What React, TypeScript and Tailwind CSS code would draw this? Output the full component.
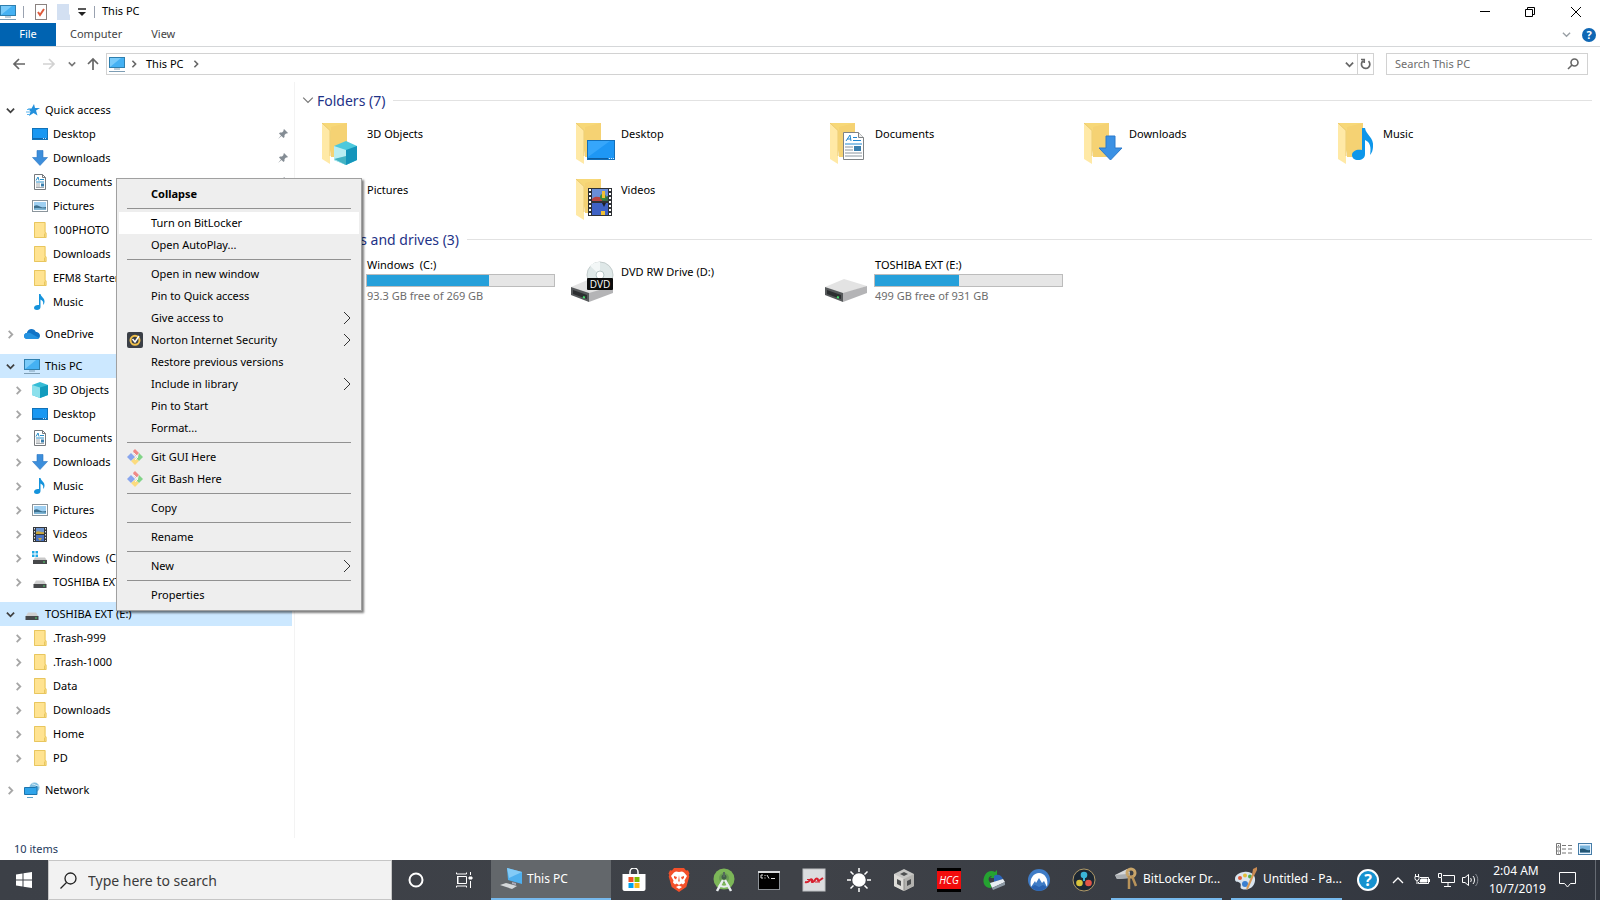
import React from 'react';
import clsx from 'clsx';

type IconName =
  | 'pc' | 'star' | 'desktop' | 'download' | 'document' | 'picture' | 'folder'
  | 'music' | 'onedrive' | 'cube' | 'video' | 'windrive' | 'drive' | 'network';

interface TreeItem {
  label: string;
  icon: IconName;
  level: 0 | 1;
  arrow?: 'open' | 'closed';
  selected?: boolean;
  pinned?: boolean;
}

const tree: TreeItem[][] = [
  [
    { label: 'Quick access', icon: 'star', level: 0, arrow: 'open' },
    { label: 'Desktop', icon: 'desktop', level: 1, pinned: true },
    { label: 'Downloads', icon: 'download', level: 1, pinned: true },
    { label: 'Documents', icon: 'document', level: 1, pinned: true },
    { label: 'Pictures', icon: 'picture', level: 1, pinned: true },
    { label: '100PHOTO', icon: 'folder', level: 1 },
    { label: 'Downloads', icon: 'folder', level: 1 },
    { label: 'EFM8 Starter', icon: 'folder', level: 1 },
    { label: 'Music', icon: 'music', level: 1 },
  ],
  [{ label: 'OneDrive', icon: 'onedrive', level: 0, arrow: 'closed' }],
  [
    { label: 'This PC', icon: 'pc', level: 0, arrow: 'open', selected: true },
    { label: '3D Objects', icon: 'cube', level: 1, arrow: 'closed' },
    { label: 'Desktop', icon: 'desktop', level: 1, arrow: 'closed' },
    { label: 'Documents', icon: 'document', level: 1, arrow: 'closed' },
    { label: 'Downloads', icon: 'download', level: 1, arrow: 'closed' },
    { label: 'Music', icon: 'music', level: 1, arrow: 'closed' },
    { label: 'Pictures', icon: 'picture', level: 1, arrow: 'closed' },
    { label: 'Videos', icon: 'video', level: 1, arrow: 'closed' },
    { label: 'Windows  (C:)', icon: 'windrive', level: 1, arrow: 'closed' },
    { label: 'TOSHIBA EXT (E:)', icon: 'drive', level: 1, arrow: 'closed' },
  ],
  [
    { label: 'TOSHIBA EXT (E:)', icon: 'drive', level: 0, arrow: 'open', selected: true },
    { label: '.Trash-999', icon: 'folder', level: 1, arrow: 'closed' },
    { label: '.Trash-1000', icon: 'folder', level: 1, arrow: 'closed' },
    { label: 'Data', icon: 'folder', level: 1, arrow: 'closed' },
    { label: 'Downloads', icon: 'folder', level: 1, arrow: 'closed' },
    { label: 'Home', icon: 'folder', level: 1, arrow: 'closed' },
    { label: 'PD', icon: 'folder', level: 1, arrow: 'closed' },
  ],
  [{ label: 'Network', icon: 'network', level: 0, arrow: 'closed' }],
];

interface MenuEntry {
  label: string;
  bold?: boolean;
  active?: boolean;
  submenu?: boolean;
  icon?: 'norton' | 'git';
}

const menuGroups: MenuEntry[][] = [
  [{ label: 'Collapse', bold: true }],
  [{ label: 'Turn on BitLocker', active: true }, { label: 'Open AutoPlay...' }],
  [
    { label: 'Open in new window' },
    { label: 'Pin to Quick access' },
    { label: 'Give access to', submenu: true },
    { label: 'Norton Internet Security', submenu: true, icon: 'norton' },
    { label: 'Restore previous versions' },
    { label: 'Include in library', submenu: true },
    { label: 'Pin to Start' },
    { label: 'Format...' },
  ],
  [
    { label: 'Git GUI Here', icon: 'git' },
    { label: 'Git Bash Here', icon: 'git' },
  ],
  [{ label: 'Copy' }],
  [{ label: 'Rename' }],
  [{ label: 'New', submenu: true }],
  [{ label: 'Properties' }],
];

const folders: { label: string; icon: IconName }[] = [
  { label: '3D Objects', icon: 'cube' },
  { label: 'Desktop', icon: 'desktop' },
  { label: 'Documents', icon: 'document' },
  { label: 'Downloads', icon: 'download' },
  { label: 'Music', icon: 'music' },
  { label: 'Pictures', icon: 'picture' },
  { label: 'Videos', icon: 'video' },
];

const SmallIcon: React.FC<{ name: IconName }> = ({ name }) => {
  switch (name) {
    case 'pc':
      return (
        <svg width="16" height="16" viewBox="0 0 16 16">
          <rect x="0.5" y="1.5" width="15" height="10" fill="#45b1f3" stroke="#2f7fae" />
          <path d="M1 11 12 2H1z" fill="#79cbfa" />
          <path d="M5 13h6M0 15.5h16" stroke="#7d9db4" />
        </svg>
      );
    case 'star':
      return (
        <svg width="16" height="16" viewBox="0 0 16 16">
          <path d="m10 2 1 4h5l-4 2.500 1.500 5L9.500 11 5 14l1.500-4.500L4 6.500h3.500z" fill="#2390dc" />
          <path d="M3 7.500h3M2 10h4M3 12.500h3" stroke="#5ab4ee" />
        </svg>
      );
    case 'desktop':
      return (
        <svg width="16" height="16" viewBox="0 0 16 16">
          <rect x="0.500" y="2.500" width="15" height="11" fill="#1897f2" stroke="#1172b8" />
          <path d="M1 12.500h14" stroke="#0f66ad" />
          <path d="M11 12.500h1m1 0h1" stroke="#bfe2fb" />
        </svg>
      );
    case 'download':
      return (
        <svg width="16" height="16" viewBox="0 0 16 16">
          <path d="M5 .5h6v7h4.500L8 15.500.5 7.500H5z" fill="#3c8edb" stroke="#2a76c2" strokeWidth=".6" />
        </svg>
      );
    case 'document':
      return (
        <svg width="16" height="16" viewBox="0 0 16 16">
          <path d="M2.500.5h8l3 3v12h-11z" fill="#fff" stroke="#75797d" />
          <path d="M10.500.5v3h3" fill="none" stroke="#75797d" />
          <path d="M4 6.500 6 3l1 3.500M8 5.500h4M4 8h8" stroke="#2a8fc9" fill="none" />
          <path d="M4 10h4M4 12h4M4 13.500h8" stroke="#8a9298" strokeWidth=".8" />
          <rect x="9" y="9.500" width="3" height="3" fill="#3a7fae" />
        </svg>
      );
    case 'picture':
      return (
        <svg width="16" height="16" viewBox="0 0 16 16">
          <rect x="0.500" y="2.500" width="15" height="11" fill="#fff" stroke="#8b959c" />
          <rect x="2" y="4" width="12" height="8" fill="#9fd0f2" />
          <path d="M2 8c3-2 5 0 7 1s4 0 5 0v3H2z" fill="#3c6f8e" />
          <path d="M2 10.500c4-1 8 0 12 0V12H2z" fill="#7fb6d6" />
        </svg>
      );
    case 'folder':
      return (
        <svg width="16" height="16" viewBox="0 0 16 16">
          <path d="M2 0h11.500v10l1 .5V16H2z" fill="#ffe391" />
          <path d="M2.500.5h10.500v10l1 .5v4.500H2.500z" fill="none" stroke="#e8c65f" />
          <path d="M12.500 15.500v-4" stroke="#e8c65f" />
        </svg>
      );
    case 'music':
      return (
        <svg width="16" height="16" viewBox="0 0 16 16">
          <path d="M7 0h1.500c.5 3 4.500 4 4 8-.1 1.200-.6 2.200-1.500 3 .8-2.800-.2-4.500-2.500-5.500V13c0 1.800-1.500 3-3.500 3-1.800 0-3-1-3-2.300C2 11.800 4.500 10.500 7 11z" fill="#1593dc" />
        </svg>
      );
    case 'onedrive':
      return (
        <svg width="16" height="16" viewBox="0 0 16 16">
          <path d="M3.500 13C1.500 13 0 11.800 0 10c0-1.600 1.200-2.800 2.800-3C3.500 4.500 5.300 3 7.500 3c2 0 3.500 1 4.200 2.800C14.200 6 16 7.500 16 9.700c0 2-1.300 3.300-3.300 3.300z" fill="#1073c6" />
          <path d="M2.800 7c2-.7 3.700 0 5.200 1l7 4c-.6.6-1.400 1-2.300 1H3.500C1.500 13 0 11.800 0 10c0-1.600 1.200-2.800 2.800-3z" fill="#2492e0" />
        </svg>
      );
    case 'cube':
      return (
        <svg width="16" height="16" viewBox="0 0 16 16">
          <path d="M0 3 8 0l8 3v10l-8 3-8-3z" fill="#35bcd6" />
          <path d="m0 3 8 2.500V16l-8-3z" fill="#8be0ec" />
          <path d="M16 3 8 5.500V16l8-3z" fill="#119bbd" />
        </svg>
      );
    case 'video':
      return (
        <svg width="16" height="16" viewBox="0 0 16 16">
          <rect x="1" y="1" width="14" height="15" fill="#33373b" />
          <rect x="4" y="2" width="8" height="6" fill="#6d95cf" />
          <rect x="4" y="9" width="8" height="6" fill="#4a72c0" />
          <path d="M4 6c3-2 5 1 8 0v2H4zM6 12h4l-2 3z" fill="#c9a63c" />
          <path d="M2.500 2v13M13.500 2v13" stroke="#dfe3e6" strokeDasharray="1.500 1.500" />
        </svg>
      );
    case 'windrive':
      return (
        <svg width="16" height="16" viewBox="0 0 16 16">
          <path d="M0 1h2.500v2.500H0zM3.500 1H6v2.500H3.500zM0 4.500h2.500V7H0zM3.500 4.500H6V7H3.500z" fill="#1fa9e6" />
          <path d="M3 7.500h10l2 3H1z" fill="#c9c9c9" />
          <rect x="1" y="10" width="14" height="4" fill="#46484a" />
          <path d="M11 12h2" stroke="#51d36c" />
        </svg>
      );
    case 'drive':
      return (
        <svg width="16" height="16" viewBox="0 0 16 16">
          <path d="M4 6.500h8l2.500 4h-13z" fill="#cfcfcf" />
          <rect x="1.500" y="10" width="13" height="4" fill="#46484a" />
          <path d="M11 12h2" stroke="#51d36c" />
        </svg>
      );
    default:
      return (
        <svg width="16" height="16" viewBox="0 0 16 16">
          <circle cx="10.500" cy="5.500" r="5" fill="#82bfe0" />
          <path d="M8 2c3 0 4 2 7 2" stroke="#d6ecf7" fill="none" />
          <path d="M.5 5.500h10.500l2-1v8h-12.500z" fill="#2fa4ea" stroke="#1c74ad" />
          <path d="M3 15.500h6" stroke="#5aa1c9" />
        </svg>
      );
  }
};

/* Large folder with the content glyph laid over its lower right corner */
const FolderTile: React.FC<{ name: IconName }> = ({ name }) => (
  <svg width="46" height="48" viewBox="0 0 46 48" className="shrink-0">
    <path d="M2 2h25v34H12z" fill="#f7d878" />
    <path d="m27 2-16 4v30h16z" fill="#f5d273" />
    <path d="M2 2v36l8 5V9.500z" fill="#ffe9a6" />
    <path d="m2 2 8 7.500V35" fill="none" stroke="#eccb72" />
    {name === 'cube' && (
      <g>
        <path d="m14 25 12-5 11 5v14l-11 5-12-5z" fill="#4cc9dd" />
        <path d="m14 25 12 4v15l-12-5z" fill="#b9edf2" />
        <path d="m14 38 12-3v9z" fill="#43b3c4" />
        <path d="M37 25 26 29v15l11-5z" fill="#1495bb" />
      </g>
    )}
    {name === 'desktop' && (
      <g>
        <rect x="13.500" y="19.500" width="27" height="19" fill="#1e97f5" stroke="#146fb9" />
        <path d="M14 36 36 20H14z" fill="#36a6fb" />
        <path d="M14 37.500h20" stroke="#0e5da0" />
        <path d="M35 37.500h1m1 0h1m1 0h1" stroke="#d5ecfd" />
      </g>
    )}
    {name === 'document' && (
      <g>
        <path d="M15.500 11.500h15l5 5v22h-20z" fill="#fff" stroke="#7e8285" />
        <path d="M30.500 11.500v5h5" fill="#eee" stroke="#7e8285" />
        <path d="m18 20 4-6 1 6m-4-2h4M25 16.500h4M25 19.500h8M17 23h17" stroke="#2187cf" fill="none" />
        <path d="M17 26h8M17 29h8M17 32h17M17 35h17" stroke="#8a949c" />
        <rect x="26" y="25" width="7" height="5" fill="#3b7fae" />
      </g>
    )}
    {name === 'download' && (
      <path d="M24 15h9v12h7L28.500 39 17 27h7z" fill="#3b91e4" stroke="#2c7bcc" />
    )}
    {name === 'music' && (
      <path d="M26 7h3c1 7 9 9 8 19-.2 3-1 6-3 8 1.500-8 0-13-5-15v14c0 4-3 6-7 6-3.500 0-6-2-6-5 0-4 5-6 10-5z" fill="#0d96ea" />
    )}
    {name === 'picture' && (
      <g>
        <rect x="12.500" y="18.500" width="28" height="20" fill="#fff" stroke="#8b959c" />
        <rect x="15" y="21" width="23" height="15" fill="#8cc7ee" />
        <path d="M15 29c8-4 14 3 23 1v6H15z" fill="#3c6f8e" />
      </g>
    )}
    {name === 'video' && (
      <g>
        <rect x="14" y="11" width="24" height="28" fill="#2e3135" />
        <rect x="18" y="12" width="16" height="12" fill="#6a8ed6" />
        <rect x="18" y="26" width="16" height="12" fill="#3f62c4" />
        <path d="M18 22c4-4 7-1 10-2v4H18z" fill="#b94440" />
        <path d="M28 24v-3l6-2v5z" fill="#3b6f42" />
        <circle cx="29" cy="20" r="3" fill="#3a8a3d" />
        <path d="M28 14h3v7h-3zM27 34h4v4h-4z" fill="#f0c033" />
        <path d="M28 26h4l-2 4z" fill="#1d2126" />
        <path d="M16 12v27M36 12v27" stroke="#fff" strokeWidth="2" strokeDasharray="2 2" />
      </g>
    )}
  </svg>
);

const DriveGlyph: React.FC<{ dvd?: boolean }> = ({ dvd }) => (
  <svg width="46" height="42" viewBox="0 0 46 42" className="mt-1 shrink-0">
    <path d="m1 26 19-8 23 7-24 8z" fill="#e3e3e3" />
    <path d="m19 32 24-7v7l-24 9z" fill="#b4b4b6" />
    <path d="m1 26 18 6v9L1 34z" fill="#55585a" />
    <path d="m3 29 14 5v4L3 33z" fill="#2c2e30" />
    <path d="m13 36 2 .6" stroke="#43dd6a" strokeWidth="2" />
    {dvd && (
      <g>
        <circle cx="30" cy="14" r="13" fill="#dfe8e8" stroke="#c3cccc" />
        <path d="M30 14 20 5a13 13 0 0 1 10-4z" fill="#f3f7f7" />
        <circle cx="30" cy="14" r="4" fill="#fff" stroke="#b5c6c6" />
        <rect x="17" y="17" width="26" height="12" rx="1" fill="#0c0c0c" />
        <text x="30" y="27" textAnchor="middle" fontSize="10" fill="#fff" fontFamily="Open Sans, sans-serif">DVD</text>
      </g>
    )}
  </svg>
);

const Chevron: React.FC<{ dir: 'right' | 'down'; color: string; size?: number; width?: number }> = ({ dir, color, size = 9, width = 2 }) => (
  <svg width={size} height={size} viewBox="0 0 10 10" fill="none" stroke={color} strokeWidth={width} className="shrink-0">
    <path d={dir === 'right' ? 'm3 1 4 4-4 4' : 'm1 3 4 4 4-4'} />
  </svg>
);

const NortonIcon = () => (
  <svg width="16" height="16" viewBox="0 0 16 16">
    <rect width="16" height="16" rx="2" fill="#3a3f46" />
    <circle cx="8" cy="8.300" r="4.500" fill="none" stroke="#f2c14b" strokeWidth="2" />
    <path d="m5.500 7 2.500 3 4-6" fill="none" stroke="#fff" strokeWidth="1.500" />
  </svg>
);

const GitIcon = () => (
  <svg width="16" height="16" viewBox="0 0 16 16">
    <path d="m8 0 4 4-3 3-1-1-2-4z" fill="#ef8a86" />
    <path d="m4 4 4 4-4 4-4-4z" fill="#88a5ee" />
    <path d="m12 4 4 4-4 4-3-3 2-1z" fill="#82d488" />
    <path d="m8 9 4 3-4 4-4-4z" fill="#fbdb7e" />
    <path d="m7 4 4 4-3 3" stroke="#f4f4f4" fill="none" />
  </svg>
);

const ContextMenu = () => (
  <div role="menu" className="absolute left-[116px] top-[178px] w-[246px] border border-[#a0a0a0] bg-[#eeeeee] px-[2px] py-1 shadow-[2px_2px_2px_rgba(0,0,0,0.5)]">
    {menuGroups.map((group, i) => (
      <React.Fragment key={i}>
        {i > 0 && <hr className="mx-2 my-[3px] border-[#919191]" />}
        {group.map((entry) => (
          <button
            key={entry.label}
            role="menuitem"
            className={clsx(
              'flex h-[22px] w-full items-center pl-2 pr-2 text-left',
              entry.active && 'bg-white',
              entry.bold && 'font-bold',
            )}
          >
            <span className="w-6">
              {entry.icon === 'norton' && <NortonIcon />}
              {entry.icon === 'git' && <GitIcon />}
            </span>
            <span className="flex-1">{entry.label}</span>
            {entry.submenu && (
              <svg width="8" height="14" viewBox="0 0 8 14" fill="none" stroke="#333">
                <path d="m1 1 6 6-6 6" />
              </svg>
            )}
          </button>
        ))}
      </React.Fragment>
    ))}
  </div>
);

const TitleBar = () => (
  <header className="flex h-[23px] items-center">
    <SmallIcon name="pc" />
    <span className="ml-[7px] h-3 w-px bg-gray-400" />
    <button aria-label="Properties" className="ml-[11px]">
      <svg width="12" height="16" viewBox="0 0 12 16">
        <rect x=".5" y=".5" width="11" height="15" fill="#fff" stroke="#8a8280" />
        <path d="m3 8 2 3 4-6" stroke="#df5b3c" strokeWidth="2" fill="none" />
      </svg>
    </button>
    <button aria-label="New folder" className="ml-[10px]">
      <svg width="13" height="16" viewBox="0 0 13 16">
        <path d="M0 0h12v10l1 1v5H0z" fill="#d3e0f2" />
      </svg>
    </button>
    <button aria-label="Customize Quick Access Toolbar" className="ml-2">
      <svg width="8" height="8" viewBox="0 0 8 8">
        <path d="M0 1h8" stroke="#222" strokeWidth="1.500" />
        <path d="M0 4h8L4 8z" fill="#222" />
      </svg>
    </button>
    <span className="ml-2 h-3 w-px bg-gray-400" />
    <h1 className="ml-[7px] flex-1">This PC</h1>
    <button aria-label="Minimize" className="flex w-[45px] justify-center">
      <svg width="10" height="10" viewBox="0 0 10 10" stroke="#000"><path d="M0 4.500h10" /></svg>
    </button>
    <button aria-label="Restore" className="flex w-[45px] justify-center">
      <svg width="10" height="10" viewBox="0 0 10 10" stroke="#000" fill="none"><path d="M.5 2.500h7v7h-7zM2.500 2V.5h7v7H8" /></svg>
    </button>
    <button aria-label="Close" className="flex w-12 justify-center">
      <svg width="12" height="12" viewBox="0 0 12 12" stroke="#000"><path d="m1 1 10 10M11 1 1 11" /></svg>
    </button>
  </header>
);

const Ribbon = () => (
  <nav className="flex h-6 items-stretch border-b border-[#d5d7d9] text-[#444]">
    <button className="w-14 bg-[#0063b1] text-white">File</button>
    <button className="ml-[14px]">Computer</button>
    <button className="ml-[29px]">View</button>
    <span className="flex-1" />
    <button aria-label="Expand the Ribbon" className="mr-[11px]">
      <Chevron dir="down" color="#9aa0a6" width={1.5} />
    </button>
    <button aria-label="Help" className="mr-1">
      <svg width="14" height="14" viewBox="0 0 14 14">
        <circle cx="7" cy="7" r="7" fill="#0f67b4" />
        <text x="7" y="11" textAnchor="middle" fontSize="11" fontWeight="700" fill="#fff">?</text>
      </svg>
    </button>
  </nav>
);

const AddressBar = () => (
  <div className="flex items-center pl-3 pr-3 pt-[6px]">
    <button aria-label="Back">
      <svg width="14" height="12" viewBox="0 0 14 12" fill="none" stroke="#666" strokeWidth="1.700"><path d="M13 6H2m5-5L2 6l5 5" /></svg>
    </button>
    <button aria-label="Forward" className="ml-4">
      <svg width="14" height="12" viewBox="0 0 14 12" fill="none" stroke="#d2d2d2" strokeWidth="1.700"><path d="M1 6h11M7 1l5 5-5 5" /></svg>
    </button>
    <button aria-label="Recent locations" className="ml-3">
      <Chevron dir="down" color="#777" size={8} />
    </button>
    <button aria-label="Up" className="ml-[11px]">
      <svg width="12" height="14" viewBox="0 0 12 14" fill="none" stroke="#666" strokeWidth="1.700"><path d="M6 13V2M1 7l5-5 5 5" /></svg>
    </button>
    <div className="ml-[7px] flex h-[22px] flex-1 items-center border border-[#d2d2d2] pl-[2px]">
      <SmallIcon name="pc" />
      <span className="ml-[5px]"><Chevron dir="right" color="#666" size={8} /></span>
      <button className="ml-2">This PC</button>
      <span className="ml-2 flex-1"><Chevron dir="right" color="#666" size={8} /></span>
      <button aria-label="Previous locations" className="mr-[3px]"><Chevron dir="down" color="#666" /></button>
      <button aria-label="Refresh" className="flex h-full w-4 items-center justify-center border-l border-[#d2d2d2]">
        <svg width="11" height="12" viewBox="0 0 11 12" fill="none" stroke="#666" strokeWidth="1.700">
          <path d="M8.500 3.200A4.200 4.200 0 1 1 3 3M1 1.500h3.200V5" />
        </svg>
      </button>
    </div>
    <label className="ml-3 flex h-[22px] w-[202px] items-center border border-[#d2d2d2] px-2">
      <input type="search" aria-label="Search This PC" placeholder="Search This PC" className="min-w-0 flex-1 outline-none placeholder:text-[#6d6d6d]" />
      <svg width="12" height="12" viewBox="0 0 12 12" fill="none" stroke="#666" strokeWidth="1.600">
        <circle cx="7.500" cy="4.500" r="3.500" />
        <path d="M5 7 1 11" />
      </svg>
    </label>
  </div>
);

const Sidebar = () => (
  <aside className="w-[295px] shrink-0 border-r border-[#f3f3f3] pr-[2px] pt-4">
    {tree.map((group, i) => (
      <ul key={i} className="mb-2">
        {group.map((item, j) => (
          <li key={j} className={clsx('flex h-6 items-center', item.selected && 'bg-[#cce8ff]')}>
            <button className={clsx('flex w-full items-center text-left', item.level === 0 ? 'pl-[6px]' : 'pl-[14px]')}>
              <span className="w-[18px]">
                {item.arrow && (
                  <Chevron dir={item.arrow === 'open' ? 'down' : 'right'} color={item.arrow === 'open' ? '#404040' : '#a6a6a6'} />
                )}
              </span>
              <SmallIcon name={item.icon} />
              <span className="ml-[5px] flex-1 whitespace-pre">{item.label}</span>
              {item.pinned && (
                <svg width="10" height="10" viewBox="0 0 10 10" className="mr-1">
                  <path d="m6 0 4 4-1 .5-1 0-1.500 1.500v2L5.500 9 3.500 7 0 10l3-3.500L1 4.500 2 3.500h2L5.500 2V1z" fill="#848c94" />
                </svg>
              )}
            </button>
          </li>
        ))}
      </ul>
    ))}
  </aside>
);

const SectionHeader: React.FC<{ title: string }> = ({ title }) => (
  <h2 className="flex h-6 items-center text-[14px] text-[#1e3287]">
    <span className="mr-[3px]"><Chevron dir="down" color="#777" size={12} width={1} /></span>
    {title}
    <span className="ml-2 h-px flex-1 bg-[#e2e2e2]" />
  </h2>
);

const UsageBar: React.FC<{ used: number }> = ({ used }) => (
  <div className="h-[13px] w-full border border-[#bcbcbc] bg-[#e6e6e6]">
    <div className="h-full bg-[#26a0da]" style={{ width: `${used}%` }} />
  </div>
);

const Drive: React.FC<{ name: string; used?: number; detail?: string }> = ({ name, used, detail }) => (
  <div className="flex h-14 w-[254px] pt-[6px]">
    <DriveGlyph dvd={used === undefined} />
    {used === undefined ? (
      <p className="ml-[5px] pt-[7px] leading-4">{name}</p>
    ) : (
      <div className="ml-1 w-[189px]">
        <p className="mb-px whitespace-pre pl-px leading-4">{name}</p>
        <UsageBar used={used} />
        <p className="pl-px pt-px leading-4 text-[#6d6d6d]">{detail}</p>
      </div>
    )}
  </div>
);

const Content = () => (
  <main className="min-w-0 flex-1 pl-[7px] pr-2 pt-[6px]">
    <SectionHeader title="Folders (7)" />
    <div className="mt-[9px] flex flex-wrap pl-[18px]">
      {folders.map((f) => (
        <div key={f.label} className="flex h-14 w-[254px]">
          <FolderTile name={f.icon} />
          <p className="pl-px pt-[5px] leading-4">{f.label}</p>
        </div>
      ))}
    </div>
    <div className="-mt-1.5">
      <SectionHeader title="Devices and drives (3)" />
    </div>
    <div className="flex flex-wrap pl-[14px]">
      <Drive name="Windows  (C:)" used={65} detail="93.3 GB free of 269 GB" />
      <Drive name="DVD RW Drive (D:)" />
      <Drive name="TOSHIBA EXT (E:)" used={45} detail="499 GB free of 931 GB" />
    </div>
  </main>
);

const StatusBar = () => (
  <footer className="flex h-[22px] items-center pl-[14px] pr-2 text-[#1e395b]">
    <span className="flex-1">10 items</span>
    <button aria-label="Details view" className="mr-[6px]">
      <svg width="16" height="12" viewBox="0 0 16 12" fill="none" stroke="#777">
        <path d="M.5.500h4v11h-4zM.5 4h4M.5 8h4M2 2.500h1M2 6h1M2 10h1M6 2.500h4M6 6h4M6 10h4M12 2.500h4M12 6h4M12 10h4" />
      </svg>
    </button>
    <button aria-label="Large icons view">
      <svg width="14" height="12" viewBox="0 0 14 12">
        <rect x=".5" y=".5" width="13" height="11" fill="#e8f4ff" stroke="#467da8" />
        <rect x="2" y="2.500" width="10" height="7" fill="#79b4dc" />
        <path d="M2 6c4-2 6 2 10 1v2.500H2z" fill="#235574" />
      </svg>
    </button>
  </footer>
);

const taskbarApps: { name: string; art: React.ReactNode }[] = [
  {
    name: 'Microsoft Store',
    art: (
      <g>
        <path d="M8 7V4a4 4 0 0 1 8 0v3" fill="none" stroke="#fff" strokeWidth="1.500" />
        <path d="M.5 6h23v15c0 1-1 2-2 2h-19c-1 0-2-1-2-2z" fill="#fff" />
        <path d="M6.500 9h5v5h-5z" fill="#f05125" />
        <path d="M12.500 9h5v5h-5z" fill="#7fba00" />
        <path d="M6.500 15h5v5h-5z" fill="#00a3ee" />
        <path d="M12.500 15h5v5h-5z" fill="#fdb813" />
      </g>
    ),
  },
  {
    name: 'Brave',
    art: (
      <g>
        <path d="M7 0h10l2 2.500 2-.2 1.500 3.200-.8 1.500.6 1.500-3 10.500L12 24l-7.300-5-3-10.500.6-1.500-.8-1.500L3 2.300l2 .2z" fill="#f4502a" />
        <path d="m12 4 3-.5 2 1 3 3.500-2.500 4.500.5 2-2 2-1.500-1L12 17l-2.500-1.500-1.500 1-2-2 .5-2L4 8l3-3.500 2-1z" fill="#fff" />
        <path d="m7 8 3 1-1 2.500L7 10zM17 8l-3 1 1 2.500 2-1.500zM12 7l.7 6-.7 1-.7-1z" fill="#f4502a" />
        <path d="m9 19 3 2 3-2-3-1.500z" fill="#fff" />
      </g>
    ),
  },
  {
    name: 'Android Studio',
    art: (
      <g>
        <circle cx="12" cy="11" r="10.500" fill="#7cb658" />
        <circle cx="12" cy="10" r="5" fill="#699c52" />
        <circle cx="12" cy="9" r="2.500" fill="#43604a" />
        <path d="M11 12 5 23M13 12l6 11" stroke="#e9eef0" strokeWidth="2.500" fill="none" />
        <path d="M7 17c3 2 7 2 10 0" stroke="#e9eef0" strokeWidth="2" fill="none" />
        <path d="M12 4v5" stroke="#566c5c" strokeWidth="2" />
      </g>
    ),
  },
  {
    name: 'Command Prompt',
    art: (
      <g>
        <rect x="1.500" y="3.500" width="21" height="18" fill="#000" stroke="#8d9298" />
        <path d="M1 4h22" stroke="#d8dadc" strokeWidth="2" />
        <path d="M6 7H4v3h2M8 7v1M8 9.500v1M10 7l2 3.500M14 10.500h4" stroke="#ddd" fill="none" />
      </g>
    ),
  },
  {
    name: 'Simplicity Studio',
    art: (
      <g>
        <rect x="1" y="1" width="22" height="22" fill="#dcdddf" stroke="#bfc1c4" />
        <path d="M3 14c3 1 4-1 5-2s3-1 2 1 2 1 3-1 3-2 3 0 2 0 5-2" stroke="#d7212f" strokeWidth="2" fill="none" />
        <path d="M5 11.500h5M13 14h5" stroke="#d7212f" />
      </g>
    ),
  },
  {
    name: 'Brightness',
    art: (
      <g stroke="#fff" strokeWidth="1.500">
        <circle cx="12" cy="12" r="6" fill="#fff" />
        <path d="M12 0v4M12 20v4M0 12h4M20 12h4M3.500 3.500l3 3M17.500 17.500l3 3M3.500 20.500l3-3M17.500 6.500l3-3" />
      </g>
    ),
  },
  {
    name: 'VirtualBox',
    art: (
      <g>
        <path d="m12 1 10 5v12l-10 5-10-5V6z" fill="#c6c6c4" />
        <path d="m2 6 10 5v12L2 18z" fill="#dddcd8" />
        <path d="m22 6-10 5v12l10-5z" fill="#b3b2af" />
        <path d="m8 6 4-2 4 2-4 2zM5 11l4 2v5l-4-2zM19 11l-4 2v5l4-2z" fill="#4d4f50" />
        <path d="M12 11v12" stroke="#8b8b88" fill="none" />
      </g>
    ),
  },
  {
    name: 'HCG',
    art: (
      <g>
        <rect width="24" height="24" fill="#000" />
        <rect y="3" width="24" height="18" fill="#f20d0d" />
        <text x="12" y="16" textAnchor="middle" fontSize="10" fontStyle="italic" fill="#fff" fontFamily="Open Sans, sans-serif">HCG</text>
      </g>
    ),
  },
  {
    name: 'Drive backup',
    art: (
      <g>
        <path d="M9 20C1 20 0 12 3 7c2-4 7-5 10-3l2-2v8H8l2-2c-4 0-5 5 0 8z" fill="#25a331" />
        <path d="M12 8c4-3 8 0 9 3l-9 3z" fill="#2b64b8" />
        <path d="m8 15 13-4 2 3-13 6z" fill="#e7edf2" />
        <path d="m10 20 13-6v3l-12 5z" fill="#8d9aa5" />
      </g>
    ),
  },
  {
    name: 'NordVPN',
    art: (
      <g>
        <circle cx="12" cy="12" r="11" fill="#3f7cc6" />
        <path d="M4 19C2 10 7 5 12 5s10 5 8 14l-3-6-2 2-3-5-3 5-1-2z" fill="#fff" />
        <path d="M4 19c5 5 11 5 16 0l-4-2-4 2-4-2z" fill="#2a63b1" />
      </g>
    ),
  },
  {
    name: 'DaVinci Resolve',
    art: (
      <g>
        <circle cx="12" cy="12" r="11" fill="#1c2733" stroke="#b09a68" />
        <circle cx="12" cy="7" r="3.300" fill="#3bb5d8" />
        <circle cx="7.500" cy="15" r="3.300" fill="#d9c43c" />
        <circle cx="16.500" cy="15" r="3.300" fill="#e25548" />
        <path d="M12 7v6" stroke="#3bb5d8" strokeWidth="2" />
      </g>
    ),
  },
];

const TaskWindow: React.FC<{ label: string; children: React.ReactNode }> = ({ label, children }) => (
  <button className="flex h-full w-[111px] items-center border-b-2 border-[#76b9ed] pl-[3px] text-left text-white">
    <svg width="24" height="24" viewBox="0 0 24 24" className="shrink-0">{children}</svg>
    <span className="ml-[5px] whitespace-nowrap">{label}</span>
  </button>
);

const Taskbar = () => (
  <div className="flex h-10 items-center bg-linear-to-r from-[#3c4047] via-[#3f4248] to-[#30353e] text-[12px]">
    <button aria-label="Start" className="flex h-full w-12 items-center justify-center">
      <svg width="16" height="16" viewBox="0 0 16 16" fill="#fff">
        <path d="m0 2.500 6.500-1v6H0zM7.500 1.300 16 0v7.500H7.500zM0 8.500h6.500v6L0 13.500zM7.500 8.500H16V16l-8.500-1.300z" />
      </svg>
    </button>
    <label className="flex h-full w-[344px] items-center border border-[#c6c6c6] bg-[#f2f2f2] pl-[11px]">
      <svg width="17" height="17" viewBox="0 0 17 17" fill="none" stroke="#222" strokeWidth="1.300">
        <circle cx="10.500" cy="6.500" r="5.500" />
        <path d="m6.500 10.500-6 6" />
      </svg>
      <input type="text" aria-label="Type here to search" placeholder="Type here to search" className="ml-[11px] min-w-0 flex-1 text-[14px] outline-none placeholder:text-[#3a3a3a]" />
    </label>
    <button aria-label="Cortana" className="flex w-12 justify-center">
      <svg width="16" height="16" viewBox="0 0 16 16"><circle cx="8" cy="8" r="6.500" fill="none" stroke="#fff" strokeWidth="2" /></svg>
    </button>
    <button aria-label="Task View" className="flex w-12 justify-center">
      <svg width="17" height="16" viewBox="0 0 17 16" fill="none" stroke="#fff">
        <path d="M2 4.500h8.500v7H2zM.5.500v1.500h10V.500M.5 15.500V14h10v1.500M1.500 4v8M14.500 0v3M14.500 9v7" />
        <path d="M13 5h3v2h-3z" fill="#fff" />
      </svg>
    </button>
    <button className="ml-[3px] flex h-full w-[120px] items-center border-b-2 border-[#76b9ed] bg-[#63676b] pl-2 text-left text-white">
      <svg width="24" height="24" viewBox="0 0 24 24">
        <path d="m8 1 15 4v12L9 13z" fill="#4eb0ef" />
        <path d="m8 1 15 4-13 6z" fill="#83cbf7" />
        <path d="m13 15 4 1v2l-4-1z" fill="#aab" />
        <path d="m1 18 6-2 11 3-5 3z" fill="#d5d8da" />
      </svg>
      <span className="ml-1">This PC</span>
    </button>
    {taskbarApps.map((app) => (
      <button key={app.name} aria-label={app.name} className="flex w-[45px] shrink-0 justify-center">
        <svg width="24" height="24" viewBox="0 0 24 24">{app.art}</svg>
      </button>
    ))}
    <div className="ml-[5px] flex h-full gap-[9px]">
      <TaskWindow label="BitLocker Dr...">
        <path d="m1 8 12-6 3 3v6l-13 1z" fill="#d6d8da" />
        <path d="m1 8 12-1 3-2v6l-13 1z" fill="#a9adb1" />
        <circle cx="17" cy="6" r="4" fill="none" stroke="#c9a56a" strokeWidth="3" />
        <path d="M15 9v13M18 9l4 10" stroke="#b8935a" strokeWidth="2.500" />
      </TaskWindow>
      <TaskWindow label="Untitled - Pa...">
        <path d="M10 5c7-1 12 3 11 9-1 7-8 10-13 8-3-1 0-4-2-6s-5 0-5-4c0-4 4-6.500 9-7z" fill="#d9e4ee" />
        <circle cx="6" cy="11" r="2" fill="#e05a3b" />
        <circle cx="11" cy="8.500" r="2" fill="#e4bd38" />
        <circle cx="16" cy="9.500" r="2" fill="#54ac4c" />
        <circle cx="11" cy="17" r="3" fill="#3a7fd0" />
        <path d="m13 22 6-14" stroke="#d99b56" strokeWidth="2" />
        <path d="m18 8 1-6 4-2v3l-3 6z" fill="#c98a52" />
      </TaskWindow>
    </div>
    <div className="ml-auto flex h-full items-center">
      <button aria-label="Get Help">
        <svg width="24" height="24" viewBox="0 0 24 24">
          <circle cx="12" cy="12" r="10" fill="#1792cf" stroke="#fff" strokeWidth="2" />
          <text x="12" y="18" textAnchor="middle" fontSize="16" fontWeight="700" fill="#fff">?</text>
        </svg>
      </button>
      <button aria-label="Show hidden icons" className="ml-3">
        <svg width="12" height="8" viewBox="0 0 12 8" fill="none" stroke="#fff" strokeWidth="1.300"><path d="m1 7 5-5 5 5" /></svg>
      </button>
      <button aria-label="Battery" className="ml-[10px]">
        <svg width="16" height="14" viewBox="0 0 16 14" fill="none" stroke="#fff">
          <path d="M6 4.500h8.500v6H4.500V9" />
          <path d="M7 6h6v3H6z" fill="#fff" />
          <path d="M15.500 6v3M1 3.500h4v2a2 2 0 0 1-4 0zM1.500 1v2M4.500 1v2M3 8v3" />
        </svg>
      </button>
      <button aria-label="Network" className="ml-2">
        <svg width="17" height="14" viewBox="0 0 17 14" fill="none" stroke="#fff">
          <path d="M5 2.500h11.500v7H3.500V5M.5.500h3v4h-3zM10 10v3M6 13.500h7" />
        </svg>
      </button>
      <button aria-label="Volume" className="ml-[7px]">
        <svg width="17" height="14" viewBox="0 0 17 14" fill="none" stroke="#fff">
          <path d="M.5 4.500H3L6.500 1.500v11L3 9.500H.5z" />
          <path d="M8.500 5c1 1 1 3 0 4" />
          <path d="M11 3c2 2 2 6 0 8" />
          <path d="M13.500 1c3 3 3 9 0 12" stroke="#8b8f96" />
        </svg>
      </button>
      <div className="ml-[10px] w-[54px] whitespace-nowrap text-center leading-[18px] text-white">
        <p>2:04 AM</p>
        <p>10/7/2019</p>
      </div>
      <button aria-label="Notifications" className="ml-4 mr-[19px]">
        <svg width="17" height="16" viewBox="0 0 17 16" fill="none" stroke="#fff"><path d="M.5.500h16v11h-5L8.500 15l-3-3.500h-5z" /></svg>
      </button>
      <span className="mr-1 h-full w-px bg-[#666b73]" />
    </div>
  </div>
);

const App: React.FC = () => {
  return (
    <div className="relative flex min-h-screen flex-col bg-white font-['Noto_Sans','Open_Sans',sans-serif] text-[11px] text-black">
      <TitleBar />
      <Ribbon />
      <AddressBar />
      <div className="flex flex-1 pt-[7px]">
        <Sidebar />
        <Content />
      </div>
      <StatusBar />
      <Taskbar />
      <ContextMenu />
    </div>
  );
};

export default App;
